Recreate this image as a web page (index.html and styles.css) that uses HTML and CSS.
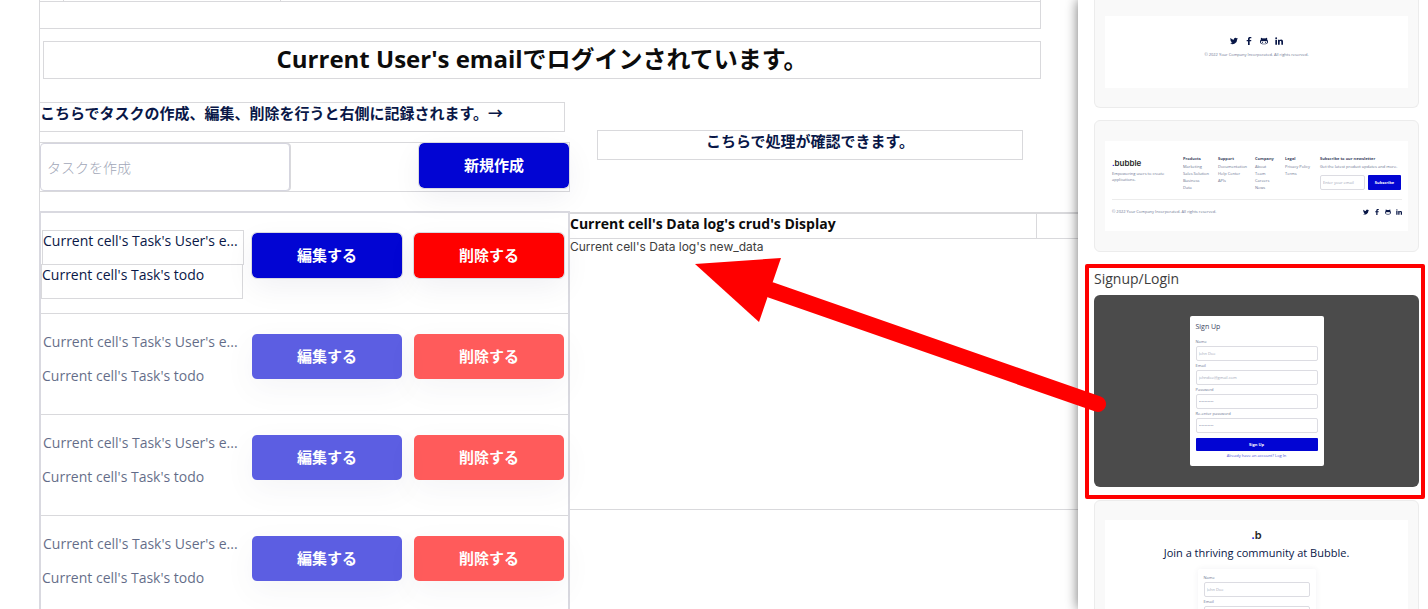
FILE: index.html
```html
<!DOCTYPE html>
<html lang="ja">
<head>
  <meta charset="UTF-8" />
  <meta name="viewport" content="width=device-width, initial-scale=1.0"/>
  <title>Task editor</title>
  <link rel="stylesheet" href="styles.css">
</head>
<body>
  <!-- Icons shared by the footer blocks -->
  <svg class="sprite" aria-hidden="true">
    <symbol id="twitter" viewBox="0 0 24 24"><path d="M24 4.6a10 10 0 0 1-2.8.8 5 5 0 0 0 2.1-2.7 10 10 0 0 1-3.1 1.2 4.9 4.9 0 0 0-8.4 4.5A14 14 0 0 1 1.7 3.2a4.9 4.9 0 0 0 1.5 6.5 5 5 0 0 1-2.2-.6 4.9 4.9 0 0 0 3.9 4.9 5 5 0 0 1-2.2.1 4.9 4.9 0 0 0 4.6 3.4A10 10 0 0 1 0 19.5a14 14 0 0 0 21.5-12.4A10 10 0 0 0 24 4.6z"/></symbol>
    <symbol id="facebook" viewBox="0 0 24 24"><path d="M9 24V13H5V9h4V6c0-4 2.400-6 6-6h4v4h-2.500C14.500 4 14 5 14 6.500V9h5l-.7 4H14v11z"/></symbol>
    <symbol id="github" viewBox="0 0 24 24"><path fill-rule="evenodd" d="M3 2c2 0 4 1 5.500 2.200a16 16 0 0 1 7 0C17 3 19 2 21 2c.8 2 .7 4 .3 5.500C23.300 9.500 24 11.500 24 14c0 6-5 8-12 8S0 20 0 14c0-2.500.7-4.500 2.700-6.500C2.300 6 2.200 4 3 2zm3 10c-2 0-3 1.500-3 3.500C3 19 7 20 12 20s9-1 9-4.500c0-2-1-3.500-3-3.500-2 0-4 .5-6 .5S8 12 6 12z"/><ellipse cx="7.500" cy="16" rx="1.500" ry="2.200"/><ellipse cx="16.500" cy="16" rx="1.500" ry="2.200"/></symbol>
    <symbol id="linkedin" viewBox="0 0 24 24"><path d="M1 8h5v15H1zM9 8h4.700v2c1-1.600 2.600-2.400 4.600-2.400 4 0 5.700 2.500 5.700 6.900V23h-5v-7.700c0-2.200-.6-3.600-2.400-3.600-1.900 0-2.600 1.400-2.600 3.600V23H9z"/><circle cx="3.500" cy="3.500" r="2.800"/></symbol>
  </svg>

  <div class="editor">
    <main class="canvas">
      <div class="workspace">
        <div class="top-strip">
          <div class="top-cell"></div>
          <div class="top-cell wide"></div>
        </div>

        <h1 class="page-title">Current User's emailでログインされています。</h1>

        <div class="columns">
          <section class="tasks">
            <p class="note">こちらでタスクの作成、編集、削除を行うと右側に記録されます。→</p>
            <form class="task-form">
              <input class="task-input" type="text" placeholder="タスクを作成" aria-label="タスクを作成">
              <button class="btn" type="button">新規作成</button>
            </form>

            <ul class="task-list">
              <li class="task selected">
                <div class="task-text">
                  <p class="task-user">Current cell's Task's User's e...</p>
                  <p class="task-todo">Current cell's Task's todo</p>
                </div>
                <button class="btn" type="button">編集する</button>
                <button class="btn danger" type="button">削除する</button>
              </li>
              <li class="task">
                <div class="task-text">
                  <p class="task-user">Current cell's Task's User's e...</p>
                  <p class="task-todo">Current cell's Task's todo</p>
                </div>
                <button class="btn" type="button">編集する</button>
                <button class="btn danger" type="button">削除する</button>
              </li>
              <li class="task">
                <div class="task-text">
                  <p class="task-user">Current cell's Task's User's e...</p>
                  <p class="task-todo">Current cell's Task's todo</p>
                </div>
                <button class="btn" type="button">編集する</button>
                <button class="btn danger" type="button">削除する</button>
              </li>
              <li class="task">
                <div class="task-text">
                  <p class="task-user">Current cell's Task's User's e...</p>
                  <p class="task-todo">Current cell's Task's todo</p>
                </div>
                <button class="btn" type="button">編集する</button>
                <button class="btn danger" type="button">削除する</button>
              </li>
            </ul>
          </section>

          <section class="logs">
            <p class="note centered">こちらで処理が確認できます。</p>
            <div class="log">
              <div class="log-head"><h2>Current cell's Data log's crud's Display</h2></div>
              <p class="log-data">Current cell's Data log's new_data</p>
            </div>
          </section>
        </div>
      </div>
    </main>

    <aside class="palette">
      <div class="card">
        <div class="preview simple-footer">
          <div class="social">
            <svg><use href="#twitter"/></svg>
            <svg><use href="#facebook"/></svg>
            <svg><use href="#github"/></svg>
            <svg><use href="#linkedin"/></svg>
          </div>
          <p>© 2022 Your Company Incorporated. All rights reserved.</p>
        </div>
      </div>

      <div class="card">
        <div class="preview big-footer">
          <div class="footer-cols">
            <div class="brand">
              <div class="logo"><span>.</span>bubble</div>
              <p>Empowering users to create applications.</p>
            </div>
            <div class="links"><h4>Products</h4><a href="#">Marketing</a><a href="#">Sales Solution</a><a href="#">Business</a><a href="#">Data</a></div>
            <div class="links"><h4>Support</h4><a href="#">Documentation</a><a href="#">Help Center</a><a href="#">APIs</a></div>
            <div class="links"><h4>Company</h4><a href="#">About</a><a href="#">Team</a><a href="#">Careers</a><a href="#">News</a></div>
            <div class="links"><h4>Legal</h4><a href="#">Privacy Policy</a><a href="#">Terms</a></div>
            <div class="links">
              <h4>Subscribe to our newsletter</h4>
              <p>Get the latest product updates and more.</p>
              <div class="subscribe">
                <input type="email" placeholder="Enter your email" aria-label="Enter your email">
                <button type="button">Subscribe</button>
              </div>
            </div>
          </div>
          <div class="footer-base">
            <p>© 2022 Your Company Incorporated. All rights reserved.</p>
            <div class="social">
              <svg><use href="#twitter"/></svg>
              <svg><use href="#facebook"/></svg>
              <svg><use href="#github"/></svg>
              <svg><use href="#linkedin"/></svg>
            </div>
          </div>
        </div>
      </div>

      <section class="marked">
        <h3>Signup/Login</h3>
        <div class="backdrop">
          <form class="signup">
            <h4>Sign Up</h4>
            <label for="name">Name</label>
            <input id="name" type="text" placeholder="John Doe">
            <label for="email">Email</label>
            <input id="email" type="email" placeholder="johndoe@gmail.com">
            <label for="password">Password</label>
            <input id="password" type="password" placeholder="••••••••••">
            <label for="password2">Re-enter password</label>
            <input id="password2" type="password" placeholder="••••••••••">
            <button type="button">Sign Up</button>
            <a href="#">Already have an account? Log In</a>
          </form>
        </div>
      </section>

      <div class="card">
        <div class="preview join">
          <div class="logo"><span>.</span>b</div>
          <h4>Join a thriving community at Bubble.</h4>
          <form class="signup join-form">
            <label for="joinName">Name</label>
            <input id="joinName" type="text" placeholder="John Doe">
            <label for="joinEmail">Email</label>
            <input id="joinEmail" type="email" placeholder="johndoe@gmail.com">
          </form>
        </div>
      </div>
    </aside>

    <svg class="arrow" viewBox="0 0 412 156" aria-hidden="true">
      <path d="M76 32 403 146" />
      <polygon points="0,6 86,0 64,64" />
    </svg>
  </div>
</body>
</html>
```
FILE: styles.css
```css
* {
  box-sizing: border-box;
}

body {
  margin: 0;
  background: #fff;
  color: #091747;
  font-family: 'Open Sans', 'Noto Sans CJK JP', sans-serif;
  font-size: 14px;
}

h1, h2, h3, h4, p, ul {
  margin: 0;
  padding: 0;
}

input, button {
  font-family: inherit;
  margin: 0;
}

a {
  color: inherit;
  text-decoration: none;
}

.sprite {
  display: none;
}

.editor {
  position: relative;
  display: flex;
  height: 100vh;
  overflow: hidden;
}

/* Canvas */
.canvas {
  flex: 1;
  min-width: 0;
  padding-left: 39px;
}

.workspace {
  border-left: 1px solid #d9d9dc;
}

.top-strip {
  display: flex;
  height: 29px;
  margin-right: 37px;
  border: 1px solid #d9d9dc;
  border-width: 0 1px 1px 0;
  background: linear-gradient(#d9d9dc, #d9d9dc) 0 1px / 100% 1px no-repeat;
}

.top-cell {
  width: 24px;
  height: 1px;
  border-right: 1px solid #d9d9dc;
}

.top-cell.wide {
  width: 217px;
}

.page-title {
  margin: 12px 37px 23px 3px;
  height: 38px;
  border: 1px solid #d9d9dc;
  color: #0c0c0c;
  font-size: 24px;
  font-weight: 700;
  line-height: 34px;
  text-align: center;
  white-space: nowrap;
}

.columns {
  display: grid;
  grid-template-columns: 530fr 508fr;
}

.tasks, .logs {
  min-width: 0;
}

.note {
  height: 30px;
  margin-right: 5px;
  border: 1px solid #d9d9dc;
  border-left: 0;
  font-size: 15px;
  font-weight: 700;
  line-height: 20px;
  white-space: nowrap;
}

.note.centered {
  margin: 28px 55px 0 27px;
  border-left: 1px solid #d9d9dc;
  text-align: center;
}

.task-form {
  display: flex;
  justify-content: space-between;
  align-items: flex-start;
  height: 50px;
  margin-top: 10px;
  border: 1px solid #d9d9dc;
  border-left: 0;
}

.task-form .btn, .selected .btn {
  outline: 1px solid #d9d9e0;
}

.task-input {
  width: 250px;
  height: 48px;
  padding: 0 6px;
  border: 1px solid #d5d5df;
  border-radius: 4px;
  box-shadow: 1px 0 #d9d9dc;
  font-size: 14px;
  font-weight: 300;
  color: #091747;
}

.task-input::placeholder {
  color: #a2a7b8;
}

.btn {
  flex: none;
  width: 150px;
  height: 45px;
  padding: 0 0 2px;
  border: 0;
  border-radius: 5px;
  background: #0205d3;
  color: #fff;
  font-size: 15px;
  font-weight: 700;
  box-shadow: 0 10px 30px rgba(9, 23, 71, 0.06);
}

.btn.danger {
  background: #ff0000;
}

.task-list {
  margin: 19px 0 0 -1px;
  border: 2px solid #d9d9e0;
  border-bottom: 0;
  list-style: none;
}

.task {
  display: flex;
  align-items: flex-start;
  gap: 12px;
  height: 101px;
  padding: 20px 4px 0 0;
  border-bottom: 1px solid #d9d9dc;
}

.task-text {
  flex: 1;
  min-width: 0;
  margin: -3px -4px 0 0;
}

.task > * {
  opacity: 0.64;
}

.task.selected > * {
  opacity: 1;
}

.task-user, .task-todo {
  width: 202px;
  height: 35px;
  border: 1px solid transparent;
  line-height: 20px;
  white-space: nowrap;
}

.task-user {
  margin: 0 0 -1px 1px;
}

.selected .task-user, .selected .task-todo {
  border-color: #d9d9dc;
}

.log {
  height: 298px;
  margin-top: 52px;
  border: 1px solid #d9d9dc;
  border-width: 2px 0 1px;
}

.log-head {
  border-bottom: 1px solid #d9d9dc;
}

.log-head h2 {
  height: 24px;
  margin-right: 41px;
  border-right: 1px solid #d9d9dc;
  color: #0c0c0c;
  font-size: 14px;
  font-weight: 700;
  line-height: 20px;
}

.log-data {
  color: #3d3d3d;
  font-family: Inter, sans-serif;
  font-size: 12px;
  line-height: 16px;
}

/* Palette */
.palette {
  flex: none;
  width: 350px;
  background: #fff;
  box-shadow: 0 0 12px rgba(0, 0, 0, 0.55);
}

.card {
  margin: 0 9px 12px 16px;
  padding: 20px 10px;
  border: 1px solid #ececec;
  border-radius: 6px;
  background: #f9f9f9;
}

.card:first-child {
  padding: 16px 10px 19px;
  border-top: 0;
  border-radius: 0 0 6px 6px;
}

.card:last-child {
  padding-top: 19px;
}

.preview {
  background: #fff;
  color: #6b7491;
  font-size: 4px;
  line-height: 6px;
}

.simple-footer {
  height: 72px;
  padding-top: 21px;
  text-align: center;
}

.social {
  display: flex;
  justify-content: center;
  gap: 7px;
}

.social svg {
  width: 8px;
  height: 8px;
  fill: #091747;
}

.simple-footer .social {
  margin-bottom: 7px;
}

.big-footer {
  height: 90px;
  padding: 14px 6px 0 7px;
}

.footer-cols {
  display: grid;
  grid-template-columns: 71px 35px 37px 30px 35px 1fr;
  height: 45px;
  border-bottom: 1px solid #ececec;
}

.logo {
  color: #262626;
  font-family: Inter, sans-serif;
  font-size: 8px;
  font-weight: 600;
  line-height: 10px;
}

.logo span {
  color: #0205d3;
}

.brand p {
  width: 54px;
  margin-top: 3px;
}

.brand .logo {
  margin-top: 3px;
}

.links h4 {
  color: #3d4663;
  font-size: 4px;
  font-weight: 700;
  line-height: 8px;
  white-space: nowrap;
}

.links a, .links p {
  display: block;
  line-height: 7px;
  white-space: nowrap;
}

.subscribe {
  display: flex;
  gap: 3px;
  margin-top: 5px;
}

.subscribe input, .signup input {
  min-width: 0;
  height: 15px;
  padding: 0 2px;
  border: 1px solid #dcdce2;
  border-radius: 2px;
  font-size: 4px;
}

.subscribe input {
  width: 45px;
}

.subscribe input::placeholder, .signup input::placeholder {
  color: #a2a7b8;
}

.subscribe button, .signup button {
  width: 33px;
  padding: 0;
  border: 0;
  border-radius: 1px;
  background: #0205d3;
  color: #fff;
  font-size: 4px;
  font-weight: 700;
}

.footer-base {
  display: flex;
  justify-content: space-between;
  align-items: center;
  padding-top: 9px;
}

.footer-base .social {
  gap: 5px;
}

.footer-base .social svg {
  width: 6px;
  height: 6px;
}

.marked {
  margin: 0 3px 1px 7px;
  padding: 0 2px 8px 5px;
  border: 4px solid #ff0000;
  border-radius: 2px;
}

.marked h3 {
  color: #3d3d3d;
  font-size: 14px;
  font-weight: 400;
  line-height: 22px;
  margin-bottom: 5px;
}

.backdrop {
  display: flex;
  justify-content: center;
  padding: 21px 0;
  border-radius: 6px;
  background: #4b4b4b;
}

.signup {
  display: flex;
  flex-direction: column;
  width: 134px;
  height: 150px;
  padding: 5px 6px;
  border-radius: 2px;
  background: #fff;
  color: #6b7491;
  font-size: 4px;
}

.signup h4 {
  margin-bottom: 5px;
  color: #3d4663;
  font-size: 7px;
  font-weight: 400;
  line-height: 12px;
}

.signup label {
  line-height: 8px;
}

.signup input {
  margin-bottom: 1px;
}

.signup button {
  width: 100%;
  height: 13px;
  margin-top: 4px;
}

.signup a {
  color: #4a4fd8;
  line-height: 10px;
  text-align: center;
}

.join {
  display: flex;
  flex-direction: column;
  align-items: center;
  padding-top: 10px;
}

.join .logo {
  font-size: 11px;
}

.join h4 {
  color: #091747;
  font-size: 11px;
  font-weight: 400;
  line-height: 26px;
}

.join-form {
  width: 118px;
  margin-top: 3px;
  box-shadow: 0 0 6px rgba(9, 23, 71, 0.06);
}

/* Arrow drawn over both panes */
.arrow {
  position: absolute;
  top: 258px;
  left: 695px;
  width: 412px;
  height: 156px;
  fill: #ff0000;
}

.arrow path {
  fill: none;
  stroke: #ff0000;
  stroke-width: 16;
  stroke-linecap: round;
}
```
